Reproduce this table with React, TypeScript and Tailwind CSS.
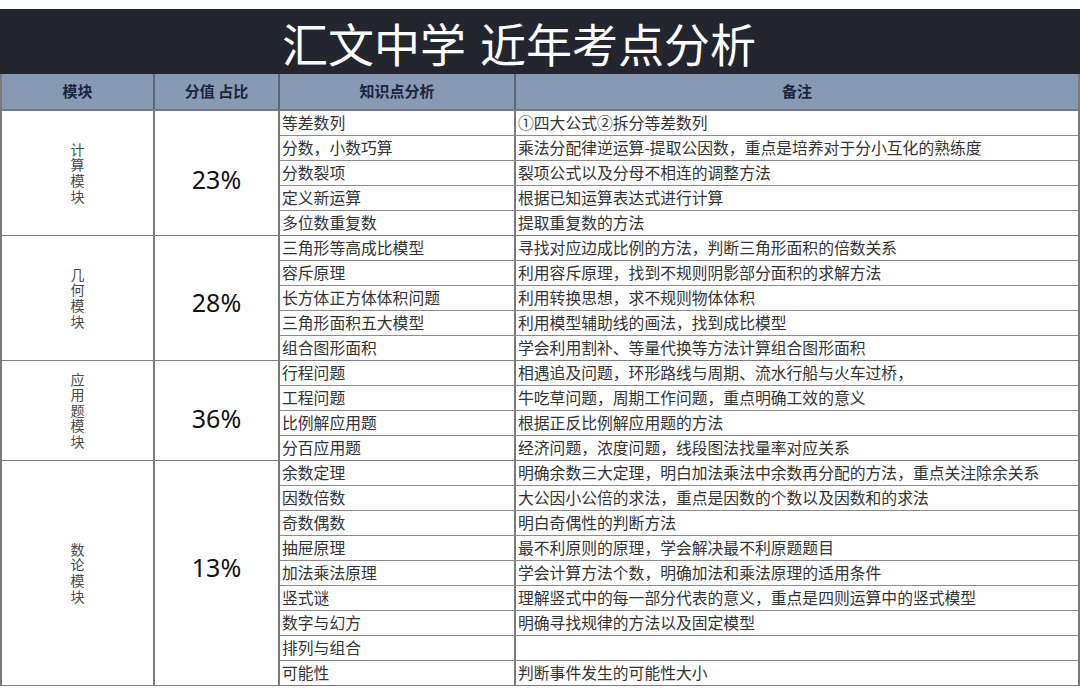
const CJK = `"Noto Sans CJK SC", "Noto Sans", sans-serif`;

type Group = {
  label: string;
  pct: string;
  pctPad: string;
  rows: [string, string][];
};

const groups: Group[] = [
  {
    label: "计算模块",
    pct: "23%",
    pctPad: "pt-[13px]",
    rows: [
      ["等差数列", "①四大公式②拆分等差数列"],
      ["分数，小数巧算", "乘法分配律逆运算-提取公因数，重点是培养对于分小互化的熟练度"],
      ["分数裂项", "裂项公式以及分母不相连的调整方法"],
      ["定义新运算", "根据已知运算表达式进行计算"],
      ["多位数重复数", "提取重复数的方法"],
    ],
  },
  {
    label: "几何模块",
    pct: "28%",
    pctPad: "pt-[10px]",
    rows: [
      ["三角形等高成比模型", "寻找对应边成比例的方法，判断三角形面积的倍数关系"],
      ["容斥原理", "利用容斥原理，找到不规则阴影部分面积的求解方法"],
      ["长方体正方体体积问题", "利用转换思想，求不规则物体体积"],
      ["三角形面积五大模型", "利用模型辅助线的画法，找到成比模型"],
      ["组合图形面积", "学会利用割补、等量代换等方法计算组合图形面积"],
    ],
  },
  {
    label: "应用题模块",
    pct: "36%",
    pctPad: "pt-[16px]",
    rows: [
      ["行程问题", "相遇追及问题，环形路线与周期、流水行船与火车过桥，"],
      ["工程问题", "牛吃草问题，周期工作问题，重点明确工效的意义"],
      ["比例解应用题", "根据正反比例解应用题的方法"],
      ["分百应用题", "经济问题，浓度问题，线段图法找量率对应关系"],
    ],
  },
  {
    label: "数论模块",
    pct: "13%",
    pctPad: "pb-[10px]",
    rows: [
      ["余数定理", "明确余数三大定理，明白加法乘法中余数再分配的方法，重点关注除余关系"],
      ["因数倍数", "大公因小公倍的求法，重点是因数的个数以及因数和的求法"],
      ["奇数偶数", "明白奇偶性的判断方法"],
      ["抽屉原理", "最不利原则的原理，学会解决最不利原题题目"],
      ["加法乘法原理", "学会计算方法个数，明确加法和乘法原理的适用条件"],
      ["竖式谜", "理解竖式中的每一部分代表的意义，重点是四则运算中的竖式模型"],
      ["数字与幻方", "明确寻找规律的方法以及固定模型"],
      ["排列与组合", ""],
      ["可能性", "判断事件发生的可能性大小"],
    ],
  },
];

function GroupBlock({ group }: { group: Group }) {
  return (
    <div className="flex border-b border-[#7d7d7d]">
      <div className="flex w-[153px] shrink-0 flex-col items-center justify-center border-r-2 border-[#7a7a7a] text-[14px] leading-[15.6px] text-[#4a4a4a]">
        {group.label.split("").map((ch, i) => (
          <span key={i} className="block h-[15.6px]">
            {ch}
          </span>
        ))}
      </div>
      <div
        className={`flex w-[125px] shrink-0 items-center justify-center border-r-2 border-[#7a7a7a] text-[25px] text-[#111] ${group.pctPad}`}
        style={{ fontFamily: `"Noto Sans", "Open Sans", sans-serif` }}
      >
        {group.pct}
      </div>
      <div className="flex flex-1 flex-col">
        {group.rows.map(([topic, note], i) => (
          <div
            key={topic}
            className={`flex ${i < group.rows.length - 1 ? "h-[25px] border-b border-[#8c8c8c]" : "h-[24px]"}`}
          >
            <div className="flex w-[236px] shrink-0 items-center border-r-2 border-[#7a7a7a] pl-[2px] text-[15.8px] text-[#333] whitespace-nowrap">
              {topic}
            </div>
            <div className="flex flex-1 items-center pl-[2px] text-[15.8px] text-[#333] whitespace-nowrap">
              {note}
            </div>
          </div>
        ))}
      </div>
    </div>
  );
}

export default function App() {
  return (
    <div className="h-[693px] w-[1080px] overflow-hidden bg-white pt-[9px]" style={{ fontFamily: CJK }}>
      <div className="flex h-[65px] items-center justify-center gap-[14px] bg-[#23252f] pr-[42px] text-[46px] leading-none text-white">
        <span>汇文中学</span>
        <span>近年考点分析</span>
      </div>
      <div className="border-x-2 border-[#7a7a7a]">
        <div className="flex h-[37px] border-b-2 border-[#6f7a8a] bg-[#8799b3] text-[15px] font-bold text-[#1c2540]">
          <div className="flex w-[153px] shrink-0 items-center justify-center border-r-2 border-[#5d6675]">模块</div>
          <div className="flex w-[125px] shrink-0 items-center justify-center border-r-2 border-[#5d6675]">分值 占比</div>
          <div className="flex w-[236px] shrink-0 items-center justify-center border-r-2 border-[#5d6675]">知识点分析</div>
          <div className="flex flex-1 items-center justify-center">备注</div>
        </div>
        {groups.map((g) => (
          <GroupBlock key={g.label} group={g} />
        ))}
      </div>
    </div>
  );
}
